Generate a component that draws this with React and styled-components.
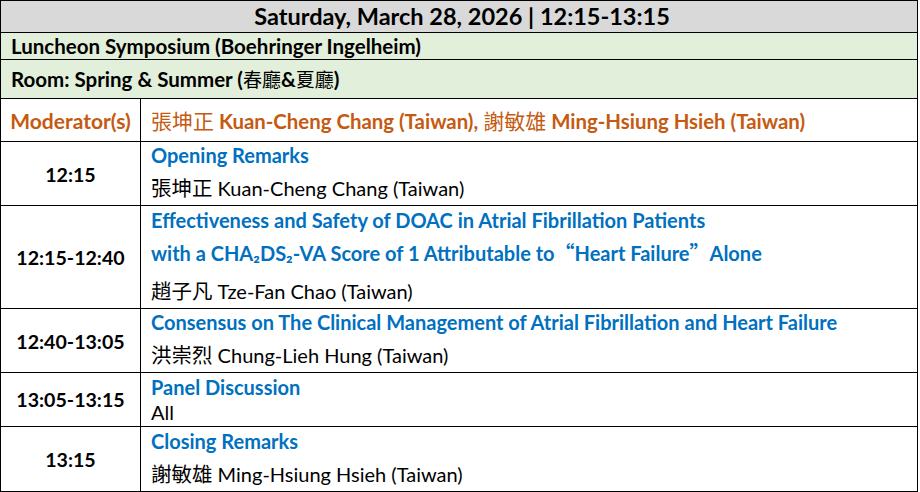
import styled, { createGlobalStyle } from "styled-components";

const GlobalStyle = createGlobalStyle`
  html, body {
    margin: 0;
    padding: 0;
    background: #ffffff;
  }
  body {
    font-family: Lato, "Noto Sans CJK TC", sans-serif;
    color: #000000;
  }
`;

const Table = styled.div`
  width: 918px;
  box-sizing: border-box;
  border: 1px solid #000;
  border-bottom: none;
`;

const HeaderRow = styled.div`
  height: 32px;
  box-sizing: border-box;
  border-bottom: 1px solid #000;
  background: #d9d9d9;
  display: flex;
  align-items: center;
  justify-content: center;
  font-size: 23.5px;
  font-weight: 700;
  padding: 0 0 1px 6px;
`;

const Band = styled.div`
  height: ${(p) => p.$h}px;
  box-sizing: border-box;
  border-bottom: 1px solid #000;
  background: #e2efda;
  display: flex;
  align-items: center;
  padding: 0 0 1px 10px;
  font-size: 20.5px;
  font-weight: 700;
  white-space: nowrap;
`;

const Row = styled.div`
  display: grid;
  grid-template-columns: 140px 1fr;
  height: ${(p) => p.$h}px;
  box-sizing: border-box;
  border-bottom: 1px solid #000;
`;

const TimeCell = styled.div`
  border-right: 1px solid #000;
  display: flex;
  align-items: center;
  justify-content: center;
  font-size: ${(p) => (p.$tone === "orange" ? 21 : 19.6)}px;
  font-weight: 700;
  color: ${(p) => (p.$tone === "orange" ? "#c55a11" : "#000")};
  white-space: nowrap;
`;

const Body = styled.div`
  padding: 0 10px;
  display: flex;
  flex-direction: column;
  justify-content: ${(p) => (p.$center ? "center" : "flex-start")};
  min-width: 0;
`;

const Title = styled.div`
  color: #0070c0;
  font-weight: 700;
  font-size: 20px;
  line-height: ${(p) => p.$lh || 27}px;
  white-space: nowrap;
`;

const Speaker = styled.div`
  font-size: 20px;
  line-height: ${(p) => p.$lh || 36}px;
  white-space: nowrap;
`;

const Moderators = styled.div`
  color: #c55a11;
  font-weight: 700;
  font-size: 20.4px;
  line-height: 42px;
  white-space: nowrap;
`;

const Cjk = styled.span`
  font-family: "Noto Sans CJK TC", sans-serif;
  font-size: ${(p) => p.$size || 20.5}px;
  font-weight: ${(p) => (p.$bold ? 700 : 400)};
`;

const Quote = styled.span`
  font-family: "Noto Sans CJK TC", sans-serif;
`;

export default function App() {
  return (
    <>
      <GlobalStyle />
      <Table>
        <HeaderRow>Saturday, March 28, 2026 | 12:15-13:15</HeaderRow>
        <Band $h={27}>Luncheon Symposium (Boehringer Ingelheim)</Band>
        <Band $h={39}>
          Room: Spring &amp; Summer (<Cjk $size={19}>春廳</Cjk>&amp;<Cjk $size={19}>夏廳</Cjk>)
        </Band>
        <Row $h={43}>
          <TimeCell $tone="orange">Moderator(s)</TimeCell>
          <Body $center>
            <Moderators>
              <Cjk $size={21}>張坤正</Cjk> Kuan-Cheng Chang (Taiwan), <Cjk $size={21}>謝敏雄</Cjk> Ming-Hsiung Hsieh (Taiwan)
            </Moderators>
          </Body>
        </Row>
        <Row $h={64}>
          <TimeCell>12:15</TimeCell>
          <Body>
            <Title>Opening Remarks</Title>
            <Speaker>
              <Cjk>張坤正</Cjk> Kuan-Cheng Chang (Taiwan)
            </Speaker>
          </Body>
        </Row>
        <Row $h={103}>
          <TimeCell>12:15-12:40</TimeCell>
          <Body>
            <Title $lh={28}>Effectiveness and Safety of DOAC in Atrial Fibrillation Patients</Title>
            <Title $lh={38}>
              with a CHA₂DS₂-VA Score of 1 Attributable to<Quote>“</Quote>Heart Failure<Quote>”</Quote>Alone
            </Title>
            <Speaker $lh={36}>
              <Cjk>趙子凡</Cjk> Tze-Fan Chao (Taiwan)
            </Speaker>
          </Body>
        </Row>
        <Row $h={64}>
          <TimeCell>12:40-13:05</TimeCell>
          <Body>
            <Title>Consensus on The Clinical Management of Atrial Fibrillation and Heart Failure</Title>
            <Speaker>
              <Cjk>洪崇烈</Cjk> Chung-Lieh Hung (Taiwan)
            </Speaker>
          </Body>
        </Row>
        <Row $h={54}>
          <TimeCell>13:05-13:15</TimeCell>
          <Body>
            <Title $lh={28}>Panel Discussion</Title>
            <Speaker $lh={22}>All</Speaker>
          </Body>
        </Row>
        <Row $h={65}>
          <TimeCell>13:15</TimeCell>
          <Body>
            <Title $lh={28}>Closing Remarks</Title>
            <Speaker>
              <Cjk>謝敏雄</Cjk> Ming-Hsiung Hsieh (Taiwan)
            </Speaker>
          </Body>
        </Row>
      </Table>
    </>
  );
}
